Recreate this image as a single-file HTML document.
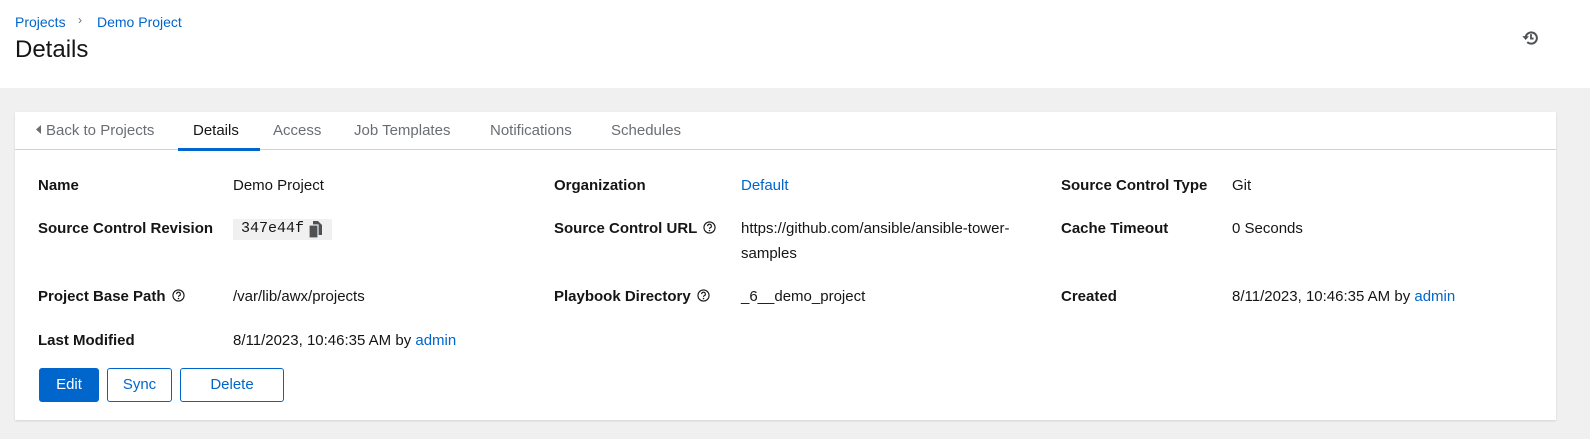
<!DOCTYPE html>
<html><head><meta charset="utf-8"><style>
*{margin:0;padding:0;box-sizing:border-box}
body{width:1590px;height:439px;background:#f0f0f0;font-family:"Liberation Sans",sans-serif;font-size:15px;color:#151515;position:relative;overflow:hidden}
.hdr{position:absolute;left:0;top:0;width:1590px;height:88px;background:#fff}
.a{position:absolute;white-space:nowrap}
.link{color:#0066cc}
.card{position:absolute;left:15px;top:112px;width:1541px;height:308px;background:#fff;box-shadow:0 1px 2px rgba(0,0,0,.12)}
.tabline{position:absolute;left:15px;top:149px;width:1541px;height:1px;background:#d2d2d2}
.tab{color:#6a6e73;font-size:15px}
.lbl{font-weight:bold;font-size:15px}
.q{display:inline-block;vertical-align:-1px;margin-left:6px}
.btn{position:absolute;top:368px;height:34px;border-radius:3px;font-size:15px;line-height:32px;text-align:center}
</style></head><body>
<div class="hdr"></div>
<div class="a link" style="left:15px;top:14px;font-size:14px">Projects</div>
<div class="a" style="left:78px;top:13px;font-size:12px;color:#6a6e73">&#x203A;</div>
<div class="a link" style="left:97px;top:14px;font-size:14px">Demo Project</div>
<div class="a" style="left:15px;top:36px;font-size:24px;font-weight:500">Details</div>
<svg class="a" style="left:1522px;top:29px" width="18" height="18" viewBox="0 0 16 16"><path d="M3.2 8a5 5 0 1 1 1.5 3.6" fill="none" stroke="#4f5255" stroke-width="1.8"/><path d="M0.3 6.3L3.2 9.8 6.2 6.5z" fill="#4f5255"/><path d="M8 4.5v4h2.3" fill="none" stroke="#4f5255" stroke-width="1.6"/></svg>
<div class="card"></div>
<div class="tabline"></div>
<svg class="a" style="left:36px;top:125px" width="5" height="9"><path d="M5 0L0 4.5 5 9z" fill="#6a6e73"/></svg>
<div class="a tab" style="left:46px;top:122px">Back to Projects</div>
<div class="a" style="left:193px;top:122px;color:#151515">Details</div>
<div class="a" style="left:178px;top:148px;width:82px;height:3px;background:#0066cc"></div>
<div class="a tab" style="left:273px;top:122px">Access</div>
<div class="a tab" style="left:354px;top:122px">Job Templates</div>
<div class="a tab" style="left:490px;top:122px">Notifications</div>
<div class="a tab" style="left:611px;top:122px">Schedules</div>

<div class="a lbl" style="left:38px;top:177px">Name</div>
<div class="a" style="left:233px;top:177px">Demo Project</div>
<div class="a lbl" style="left:554px;top:177px">Organization</div>
<div class="a link" style="left:741px;top:177px">Default</div>
<div class="a lbl" style="left:1061px;top:177px">Source Control Type</div>
<div class="a" style="left:1232px;top:177px">Git</div>

<div class="a lbl" style="left:38px;top:220px">Source Control Revision</div>
<div class="a" style="left:233px;top:219px;width:99px;height:21px;background:#f0f0f0"></div>
<div class="a" style="left:241px;top:220px;font-family:'Liberation Mono',monospace;font-size:15px">347e44f</div>
<svg class="a" style="left:309px;top:221px" width="14" height="17" viewBox="0 0 14 17"><path d="M4 0h5l4 4v10H4z" fill="#4f5255"/><rect x="0" y="4" width="9" height="13" fill="#4f5255" stroke="#f0f0f0" stroke-width="1.2"/></svg>
<div class="a lbl" style="left:554px;top:220px">Source Control URL<svg class="q" width="13" height="13" viewBox="0 0 14 14"><circle cx="7" cy="7" r="6" fill="none" stroke="#151515" stroke-width="1.2"/><path d="M5 5.5a2 2 0 1 1 2.7 1.8c-.6.3-.7.6-.7 1.2" fill="none" stroke="#151515" stroke-width="1.2"/><circle cx="7" cy="10.3" r=".8" fill="#151515"/></svg></div>
<div class="a" style="left:741px;top:216px;line-height:25px">https://github.com/ansible/ansible-tower-<br>samples</div>
<div class="a lbl" style="left:1061px;top:220px">Cache Timeout</div>
<div class="a" style="left:1232px;top:220px">0 Seconds</div>

<div class="a lbl" style="left:38px;top:288px">Project Base Path<svg class="q" width="13" height="13" viewBox="0 0 14 14"><circle cx="7" cy="7" r="6" fill="none" stroke="#151515" stroke-width="1.2"/><path d="M5 5.5a2 2 0 1 1 2.7 1.8c-.6.3-.7.6-.7 1.2" fill="none" stroke="#151515" stroke-width="1.2"/><circle cx="7" cy="10.3" r=".8" fill="#151515"/></svg></div>
<div class="a" style="left:233px;top:288px">/var/lib/awx/projects</div>
<div class="a lbl" style="left:554px;top:288px">Playbook Directory<svg class="q" width="13" height="13" viewBox="0 0 14 14"><circle cx="7" cy="7" r="6" fill="none" stroke="#151515" stroke-width="1.2"/><path d="M5 5.5a2 2 0 1 1 2.7 1.8c-.6.3-.7.6-.7 1.2" fill="none" stroke="#151515" stroke-width="1.2"/><circle cx="7" cy="10.3" r=".8" fill="#151515"/></svg></div>
<div class="a" style="left:741px;top:288px">_6__demo_project</div>
<div class="a lbl" style="left:1061px;top:288px">Created</div>
<div class="a" style="left:1232px;top:288px">8/11/2023, 10:46:35 AM by <span class="link">admin</span></div>

<div class="a lbl" style="left:38px;top:332px">Last Modified</div>
<div class="a" style="left:233px;top:332px">8/11/2023, 10:46:35 AM by <span class="link">admin</span></div>

<div class="btn" style="left:39px;width:60px;background:#0066cc;color:#fff;border:1px solid #0066cc">Edit</div>
<div class="btn" style="left:107px;width:65px;border:1px solid #0066cc;color:#0066cc">Sync</div>
<div class="btn" style="left:180px;width:104px;border:1px solid #0066cc;color:#0066cc">Delete</div>
</body></html>
